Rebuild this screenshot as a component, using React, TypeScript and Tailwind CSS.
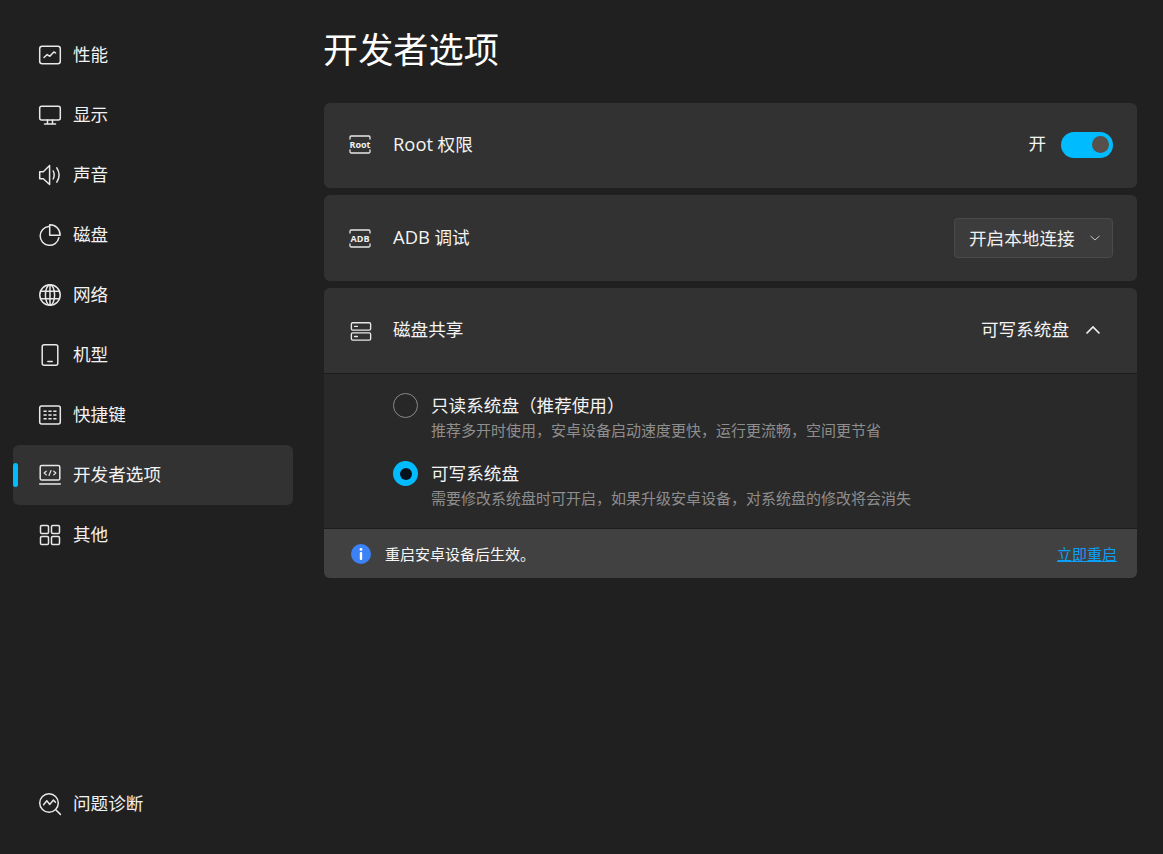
import React from "react";

const S = ({ children, w = 24, h = 24, vb = "0 0 24 24" }: { children: React.ReactNode; w?: number; h?: number; vb?: string }) => (
  <svg width={w} height={h} viewBox={vb} fill="none" stroke="#e8e8e8" strokeWidth={1.5} strokeLinecap="round" strokeLinejoin="round" className="shrink-0">
    {children}
  </svg>
);

const icons: Record<string, React.ReactNode> = {
  perf: <S><rect x="1.7" y="3.2" width="20.6" height="17.6" rx="2.5" /><path d="M6 14.5l3.2-3 2.6 1.8 4-4.3 1.8 .9" /></S>,
  display: <S><rect x="1.7" y="3.2" width="20.6" height="13.8" rx="2" /><path d="M9.5 17v4M14.5 17v4M6.5 21h11" /></S>,
  sound: <S><path d="M1.7 8.7h3.6L11.6 2.5v19l-6.3-5.8H1.7z" /><path d="M15.2 8c1.3 2.6 1.3 5.4 0 8M18.8 4.8c2.8 4.4 2.8 10 0 14.4" /></S>,
  disk: <S><path d="M10.8 3.6a9.4 9.4 0 1 0 10 11.2" /><path d="M11.7 1.8a10 10 0 0 1 10.4 10.4H11.7z" /></S>,
  net: <S><circle cx="12" cy="12" r="10.2" /><ellipse cx="12" cy="12" rx="4.6" ry="10.2" /><path d="M2.6 8.2h18.8M2.6 15.8h18.8M12 1.8v20.4" /></S>,
  device: <S><rect x="4.2" y="1.7" width="15.6" height="20.6" rx="2" /><path d="M9.8 18.4h4.4" /></S>,
  keyboard: <S><rect x="1.7" y="3" width="20.6" height="18" rx="2" /><path d="M5.5 8.2h13M5.5 12h13M5.5 15.8h13" strokeDasharray="3.2 1.7" strokeLinecap="butt" /></S>,
  dev: <S><rect x="2.2" y="2.5" width="19.6" height="14.6" rx="1.6" /><path d="M1.7 21h20.6" /><path d="M8.2 8.2l-2 1.8 2 1.8M15.8 8.2l2 1.8-2 1.8M13 7.6l-2 4.8" strokeWidth={1.2} /></S>,
  other: <S><rect x="2.5" y="2.5" width="8" height="8" rx="1.2" /><rect x="13.5" y="2.5" width="8" height="8" rx="1.2" /><rect x="2.5" y="13.5" width="8" height="8" rx="1.2" /><rect x="13.5" y="13.5" width="8" height="8" rx="1.2" /></S>,
  diag: <S><circle cx="11" cy="11" r="9.3" /><path d="M5.6 12.8l3.2-4 3 3.6 3.6-4.4 2 2.2" /><path d="M18 18l4.4 4.4" /></S>,
};

const nav: [string, string][] = [
  ["perf", "性能"],
  ["display", "显示"],
  ["sound", "声音"],
  ["disk", "磁盘"],
  ["net", "网络"],
  ["device", "机型"],
  ["keyboard", "快捷键"],
  ["dev", "开发者选项"],
  ["other", "其他"],
];

function NavItem({ icon, label, active }: { icon: string; label: string; active?: boolean }) {
  return (
    <div className={`relative flex h-[60px] items-center gap-[11px] rounded-md pl-[25px] ${active ? "bg-[#323232]" : ""}`}>
      {active && <div className="absolute left-0 top-[18px] h-[24px] w-[5px] rounded-full bg-[#00bcff]" />}
      {icons[icon]}
      <span className="mb-[2px] text-[17.6px] text-[#f2f2f2]">{label}</span>
    </div>
  );
}

const TagIcon = ({ text, size }: { text: string; size: number }) => (
  <div className="relative flex h-[19px] w-[22px] shrink-0 items-center justify-center rounded-[2px]">
    <svg width="22" height="19" viewBox="0 0 22 19" fill="none" stroke="#e8e8e8" strokeWidth={1.3} className="absolute inset-0" strokeLinecap="round">
      <path d="M1 4V2.2A1.2 1.2 0 0 1 2.2 1h17.6A1.2 1.2 0 0 1 21 2.2V4M1 15v1.8A1.2 1.2 0 0 0 2.2 18h17.6a1.2 1.2 0 0 0 1.2-1.2V15" />
    </svg>
    <span className="font-bold leading-none text-[#f0f0f0]" style={{ fontSize: size }}>{text}</span>
  </div>
);

export default function App() {
  return (
    <div
      className="flex h-[854px] w-[1163px] overflow-hidden bg-[#202020] text-white"
      style={{ fontFamily: '"Open Sans", "Noto Sans CJK SC", sans-serif' }}
    >
      <aside className="flex w-[324px] shrink-0 flex-col justify-between pb-[20px] pl-[13px] pr-[31px] pt-[25px]">
        <div className="flex flex-col">
          {nav.map(([i, l]) => (
            <NavItem key={l} icon={i} label={l} active={l === "开发者选项"} />
          ))}
        </div>
        <NavItem icon="diag" label="问题诊断" />
      </aside>

      <main className="w-[813px] pt-[21px]">
        <h1 className="mb-[23px] ml-[-1px] h-[59px] text-[35.2px] leading-[56px] text-white">开发者选项</h1>
        <div className="flex flex-col gap-[7px]">
          <div className="flex h-[85px] items-center rounded-md bg-[#323232] pb-[2px] pl-[25px] pr-[24px]">
            <TagIcon text="Root" size={9} />
            <span className="mb-[2px] ml-[22px] text-[17.6px] text-[#f4f4f4]"><span className="text-[18.4px]">Root</span> 权限</span>
            <span className="mb-[2px] ml-auto text-[17.6px] text-[#f4f4f4]">开</span>
            <div className="ml-[15px] flex h-[26px] w-[52px] items-center justify-end rounded-full bg-[#00bcff] pr-[4px]">
              <div className="h-[17px] w-[17px] rounded-full bg-[#564f4b]" />
            </div>
          </div>

          <div className="flex h-[86px] items-center rounded-md bg-[#323232] pl-[25px] pr-[24px]">
            <TagIcon text="ADB" size={9} />
            <span className="mb-[2px] ml-[22px] text-[17.6px] text-[#f4f4f4]"><span className="text-[18.4px]">ADB</span> 调试</span>
            <div className="ml-auto flex h-[40px] w-[159px] items-center rounded-[4px] border border-[#4a4a4a] bg-[#3c3c3c] pl-[14px]">
              <span className="text-[17.6px] text-[#f0f0f0]">开启本地连接</span>
              <svg width="12" height="12" viewBox="0 0 12 12" fill="none" stroke="#c8c8c8" strokeWidth={1} className="ml-[14px]">
                <path d="M1.5 4l4.5 4 4.5-4" />
              </svg>
            </div>
          </div>

          <div className="overflow-hidden rounded-md bg-[#292929]">
            <div className="flex h-[86px] items-center border-b border-[#1c1c1c] bg-[#323232] pl-[26px] pr-[36px]">
              <S w={22} h={22}>
                <rect x="1.5" y="3" width="21" height="8" rx="1.5" />
                <rect x="1.5" y="14" width="21" height="8" rx="1.5" />
                <path d="M5 7h3M5 18h3" />
              </S>
              <span className="mb-[2px] ml-[21px] text-[17.6px] text-[#f4f4f4]">磁盘共享</span>
              <span className="mb-[2px] ml-auto text-[17.6px] text-[#f4f4f4]">可写系统盘</span>
              <svg width="16" height="10" viewBox="0 0 16 10" fill="none" stroke="#f2f2f2" strokeWidth={1.6} className="mb-[2px] ml-[16px]">
                <path d="M1.5 8.5L8 2l6.5 6.5" />
              </svg>
            </div>

            <div className="flex h-[154px] flex-col pl-[69px] pt-[19px]">
              <div className="flex h-[51px] gap-[13px]">
                <div className="h-[25px] w-[25px] rounded-full border border-[#8a8a8a] bg-[#272727]" />
                <div>
                  <div className="text-[17.6px] leading-[24px] text-[#f4f4f4]">只读系统盘（推荐使用）</div>
                  <div className="text-[15px] leading-[27px] text-[#8e8e8e]">推荐多开时使用，安卓设备启动速度更快，运行更流畅，空间更节省</div>
                </div>
              </div>
              <div className="mt-[17px] flex h-[51px] gap-[13px]">
                <div className="flex h-[25px] w-[25px] items-center justify-center rounded-full bg-[#00bcff]">
                  <div className="h-[12px] w-[12px] rounded-full bg-[#07131c]" />
                </div>
                <div>
                  <div className="text-[17.6px] leading-[24px] text-[#f4f4f4]">可写系统盘</div>
                  <div className="text-[15px] leading-[27px] text-[#8e8e8e]">需要修改系统盘时可开启，如果升级安卓设备，对系统盘的修改将会消失</div>
                </div>
              </div>
            </div>

            <div className="flex h-[50px] items-center border-t border-[#1c1c1c] bg-[#414141] pl-[27px] pr-[20px]">
              <svg width="20" height="20" viewBox="0 0 20 20" className="shrink-0">
                <circle cx="10" cy="10" r="10" fill="#3b82f6" />
                <circle cx="10" cy="5.4" r="1.4" fill="#fff" />
                <rect x="8.8" y="8" width="2.4" height="8" rx="1" fill="#fff" />
              </svg>
              <span className="ml-[14px] mt-[2px] text-[15px] text-[#f6f6f6]">重启安卓设备后生效。</span>
              <span className="ml-auto mt-[2px] text-[15px] text-[#0aa0f5] underline">立即重启</span>
            </div>
          </div>
        </div>
      </main>
    </div>
  );
}
